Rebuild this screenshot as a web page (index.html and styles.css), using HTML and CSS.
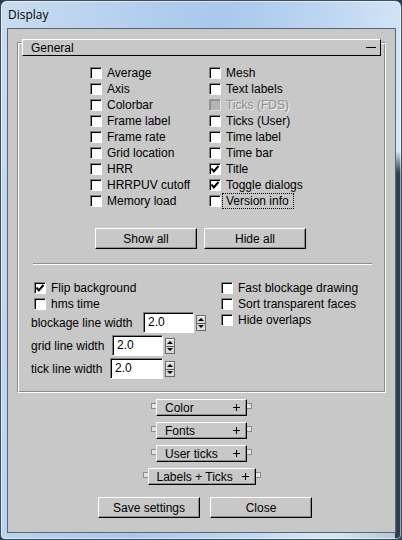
FILE: index.html
```html
<!DOCTYPE html>
<html>
<head>
<meta charset="utf-8">
<title>Display</title>
<link rel="stylesheet" href="styles.css">
</head>
<body>
<div class="window">
  <div class="titlebar">Display</div>
  <div class="client">
    <div class="group">
      <div class="group-head"><span>General</span><span class="minus"></span></div>
      <div class="checks">
        <div class="cb"><span class="box"></span><span class="lbl">Average</span></div>
        <div class="cb"><span class="box"></span><span class="lbl">Axis</span></div>
        <div class="cb"><span class="box"></span><span class="lbl">Colorbar</span></div>
        <div class="cb"><span class="box"></span><span class="lbl">Frame label</span></div>
        <div class="cb"><span class="box"></span><span class="lbl">Frame rate</span></div>
        <div class="cb"><span class="box"></span><span class="lbl">Grid location</span></div>
        <div class="cb"><span class="box"></span><span class="lbl">HRR</span></div>
        <div class="cb"><span class="box"></span><span class="lbl">HRRPUV cutoff</span></div>
        <div class="cb"><span class="box"></span><span class="lbl">Memory load</span></div>
        <div class="cb"><span class="box"></span><span class="lbl">Mesh</span></div>
        <div class="cb"><span class="box"></span><span class="lbl">Text labels</span></div>
        <div class="cb dis"><span class="box"></span><span class="lbl">Ticks (FDS)</span></div>
        <div class="cb"><span class="box"></span><span class="lbl">Ticks (User)</span></div>
        <div class="cb"><span class="box"></span><span class="lbl">Time label</span></div>
        <div class="cb"><span class="box"></span><span class="lbl">Time bar</span></div>
        <div class="cb"><span class="box"><svg class="tick" width="10" height="10" viewBox="0 0 10 10"><polyline points="1.5,4.5 3.8,7.5 8.5,2" fill="none" stroke="#000" stroke-width="2"/></svg></span><span class="lbl">Title</span></div>
        <div class="cb"><span class="box"><svg class="tick" width="10" height="10" viewBox="0 0 10 10"><polyline points="1.5,4.5 3.8,7.5 8.5,2" fill="none" stroke="#000" stroke-width="2"/></svg></span><span class="lbl">Toggle dialogs</span></div>
        <div class="cb"><span class="box"></span><span class="lbl focus">Version info</span></div>
      </div>
      <div class="btnrow">
        <div class="btn">Show all</div>
        <div class="btn">Hide all</div>
      </div>
      <div class="sep"></div>
      <div class="lower">
        <div class="lcol">
          <div class="cb"><span class="box"><svg class="tick" width="10" height="10" viewBox="0 0 10 10"><polyline points="1.5,4.5 3.8,7.5 8.5,2" fill="none" stroke="#000" stroke-width="2"/></svg></span><span class="lbl">Flip background</span></div>
          <div class="cb"><span class="box"></span><span class="lbl">hms time</span></div>
          <div class="field">
            <span class="flabel fl-block">blockage line width</span>
            <span class="input in-51">2.0</span>
            <span class="spin"><i class="up"></i><i class="down"></i></span>
          </div>
          <div class="field">
            <span class="flabel fl-grid">grid line width</span>
            <span class="input in-51">2.0</span>
            <span class="spin"><i class="up"></i><i class="down"></i></span>
          </div>
          <div class="field">
            <span class="flabel fl-tick">tick line width</span>
            <span class="input in-53">2.0</span>
            <span class="spin"><i class="up"></i><i class="down"></i></span>
          </div>
        </div>
        <div class="rcol">
          <div class="cb"><span class="box"></span><span class="lbl">Fast blockage drawing</span></div>
          <div class="cb"><span class="box"></span><span class="lbl">Sort transparent faces</span></div>
          <div class="cb"><span class="box"></span><span class="lbl">Hide overlaps</span></div>
        </div>
      </div>
    </div>

    <div class="rolls">
      <div class="roll"><span class="tab l"></span><div class="bar w1"><span>Color</span><svg class="plus" width="7" height="7" viewBox="0 0 7 7"><path d="M3.5 0V7M0 3.5H7" stroke="#000" stroke-width="1"/></svg></div><span class="tab r"></span></div>
      <div class="roll"><span class="tab l"></span><div class="bar w1"><span>Fonts</span><svg class="plus" width="7" height="7" viewBox="0 0 7 7"><path d="M3.5 0V7M0 3.5H7" stroke="#000" stroke-width="1"/></svg></div><span class="tab r"></span></div>
      <div class="roll"><span class="tab l"></span><div class="bar w1"><span>User ticks</span><svg class="plus" width="7" height="7" viewBox="0 0 7 7"><path d="M3.5 0V7M0 3.5H7" stroke="#000" stroke-width="1"/></svg></div><span class="tab r"></span></div>
      <div class="roll"><span class="tab l"></span><div class="bar w2"><span>Labels + Ticks</span><svg class="plus" width="7" height="7" viewBox="0 0 7 7"><path d="M3.5 0V7M0 3.5H7" stroke="#000" stroke-width="1"/></svg></div><span class="tab r"></span></div>
    </div>

    <div class="footer">
      <div class="btn">Save settings</div>
      <div class="btn">Close</div>
    </div>
  </div>
</div>
</body>
</html>
```
FILE: styles.css
```css
* { box-sizing: border-box; }
html, body { margin: 0; padding: 0; }
body {
  width: 402px;
  height: 540px;
  overflow: hidden;
  background: #2d3d51;
  font-family: "Liberation Sans", Arial, sans-serif;
  font-size: 12px;
  color: #000;
}

.window {
  width: 402px;
  height: 540px;
  border: 1px solid #3e4d60;
  border-radius: 7px 7px 5px 5px;
  box-shadow: inset 0 0 0 1px rgba(255, 255, 255, 0.55);
  padding: 0 5px 6px 6px;
  display: flex;
  flex-direction: column;
  background:
    linear-gradient(to bottom, rgba(45, 61, 81, 0) 150px, #2e3e52 172px) right top / 6px 100% no-repeat,
    linear-gradient(100deg, #c9dcf1 0%, #b6d0ee 25%, #a9c8ec 45%, #bcd5f1 65%, #d8e7f7 86%, #b4c3d3 100%);
}

.titlebar {
  height: 27px;
  padding: 6px 0 0 1px;
  font-family: "Open Sans", "Liberation Sans", sans-serif;
  font-size: 12px;
  line-height: 16px;
  color: #000;
}

.client {
  flex: 1;
  border: 1px solid #5a6675;
  background: #c8c8c8;
  display: flex;
  flex-direction: column;
}

/* group panel */
.group {
  margin: 13px 0 0 9px;
  width: 369px;
  border: 1px solid;
  border-color: #8a8a8a #fff #fff #8a8a8a;
  box-shadow: inset 1px 1px 0 #fff, inset -1px -1px 0 #8a8a8a;
  padding: 0 0 13px;
}

.group-head {
  margin: -4px 4px 0;
  height: 17px;
  border: 1px solid;
  border-color: #fff #000 #000 #fff;
  background: #c8c8c8;
  display: flex;
  align-items: center;
  justify-content: space-between;
  padding: 0 4px 0 8px;
}
.minus {
  width: 10px;
  height: 1px;
  background: #000;
}

.checks {
  display: grid;
  grid-template-columns: 119px auto;
  grid-template-rows: repeat(9, 16px);
  grid-auto-flow: column;
  margin: 9px 0 0 72px;
}

.cb {
  display: flex;
  align-items: center;
  height: 16px;
  white-space: nowrap;
}
.box {
  flex: none;
  width: 12px;
  height: 12px;
  background: #fff;
  border: 1px solid;
  border-color: #808080 #fff #fff #808080;
  box-shadow: inset 1px 1px 0 #000;
}
.tick { display: block; }
.lbl {
  margin-left: 1px;
  height: 16px;
  line-height: 14px;
  border: 1px dotted transparent;
  padding: 0 4px 0 3px;
}
.lbl.focus { border-color: #000; }
.cb.dis .box {
  background: #b4b4b4;
  border-color: #9a9a9a #e2e2e2 #e2e2e2 #9a9a9a;
  box-shadow: inset 1px 1px 0 #8a8a8a;
}
.cb.dis .lbl {
  color: #8e8e8e;
  text-shadow: 1px 1px 0 #f4f4f4;
}

.btnrow {
  display: flex;
  gap: 7px;
  margin: 19px 0 0 77px;
}
.btn {
  width: 102px;
  height: 21px;
  border: 1px solid;
  border-color: #fff #000 #000 #fff;
  box-shadow: inset -1px -1px 0 #8c8c8c;
  background: #c8c8c8;
  display: flex;
  align-items: center;
  justify-content: center;
}

.sep {
  margin: 14px 0 0 15px;
  width: 339px;
  height: 2px;
  border-top: 1px solid #8c8c8c;
  border-bottom: 1px solid #fff;
}

.lower {
  display: flex;
  margin-top: 15px;
}
.lcol {
  margin-left: 16px;
  width: 187px;
}

.field {
  display: flex;
  align-items: center;
  height: 21px;
  margin-left: -3px;
}
.field + .field { margin-top: 2px; }
.flabel { white-space: nowrap; }
.fl-block { width: 112px; }
.fl-grid { width: 81px; }
.fl-tick { width: 79px; }

.input {
  height: 21px;
  border: 1px solid;
  border-color: #808080 #fff #fff #808080;
  box-shadow: inset 1px 1px 0 #000;
  background: #fff;
  padding-left: 4px;
  line-height: 19px;
}
.in-51 { width: 51px; }
.in-53 { width: 53px; }

.spin {
  margin-left: 2px;
  width: 10px;
  height: 16px;
  display: flex;
  flex-direction: column;
  border: 1px solid #6a6a6a;
}
.spin i {
  flex: 1;
  display: flex;
  align-items: center;
  justify-content: center;
  background: #dcdcdc;
  border-top: 1px solid #fff;
}
.spin i.down { border-top: 1px solid #555; }
.spin i.up::after {
  content: "";
  border-left: 3px solid transparent;
  border-right: 3px solid transparent;
  border-bottom: 3px solid #000;
}
.spin i.down::after {
  content: "";
  border-left: 3px solid transparent;
  border-right: 3px solid transparent;
  border-top: 3px solid #000;
}

/* collapsed rollouts */
.rolls {
  display: flex;
  flex-direction: column;
  align-items: center;
  gap: 6px;
  margin-top: 6px;
}
.roll {
  display: flex;
  align-items: flex-start;
}
.tab {
  width: 5px;
  height: 6px;
  margin-top: 4px;
  border: 1px solid #8c8c8c;
  background: #e4e4e4;
}
.tab.l { border-right: none; }
.tab.r { border-left: none; }
.bar {
  height: 17px;
  border: 1px solid;
  border-color: #fff #000 #000 #fff;
  box-shadow: inset -1px -1px 0 #8c8c8c;
  display: flex;
  align-items: center;
  justify-content: space-between;
  padding: 0 6px 0 8px;
  white-space: nowrap;
}
.bar.w1 { width: 91px; }
.bar.w2 { width: 108px; }
.plus { display: block; }

.footer {
  display: flex;
  gap: 10px;
  margin: 12px 0 0 90px;
}
```
